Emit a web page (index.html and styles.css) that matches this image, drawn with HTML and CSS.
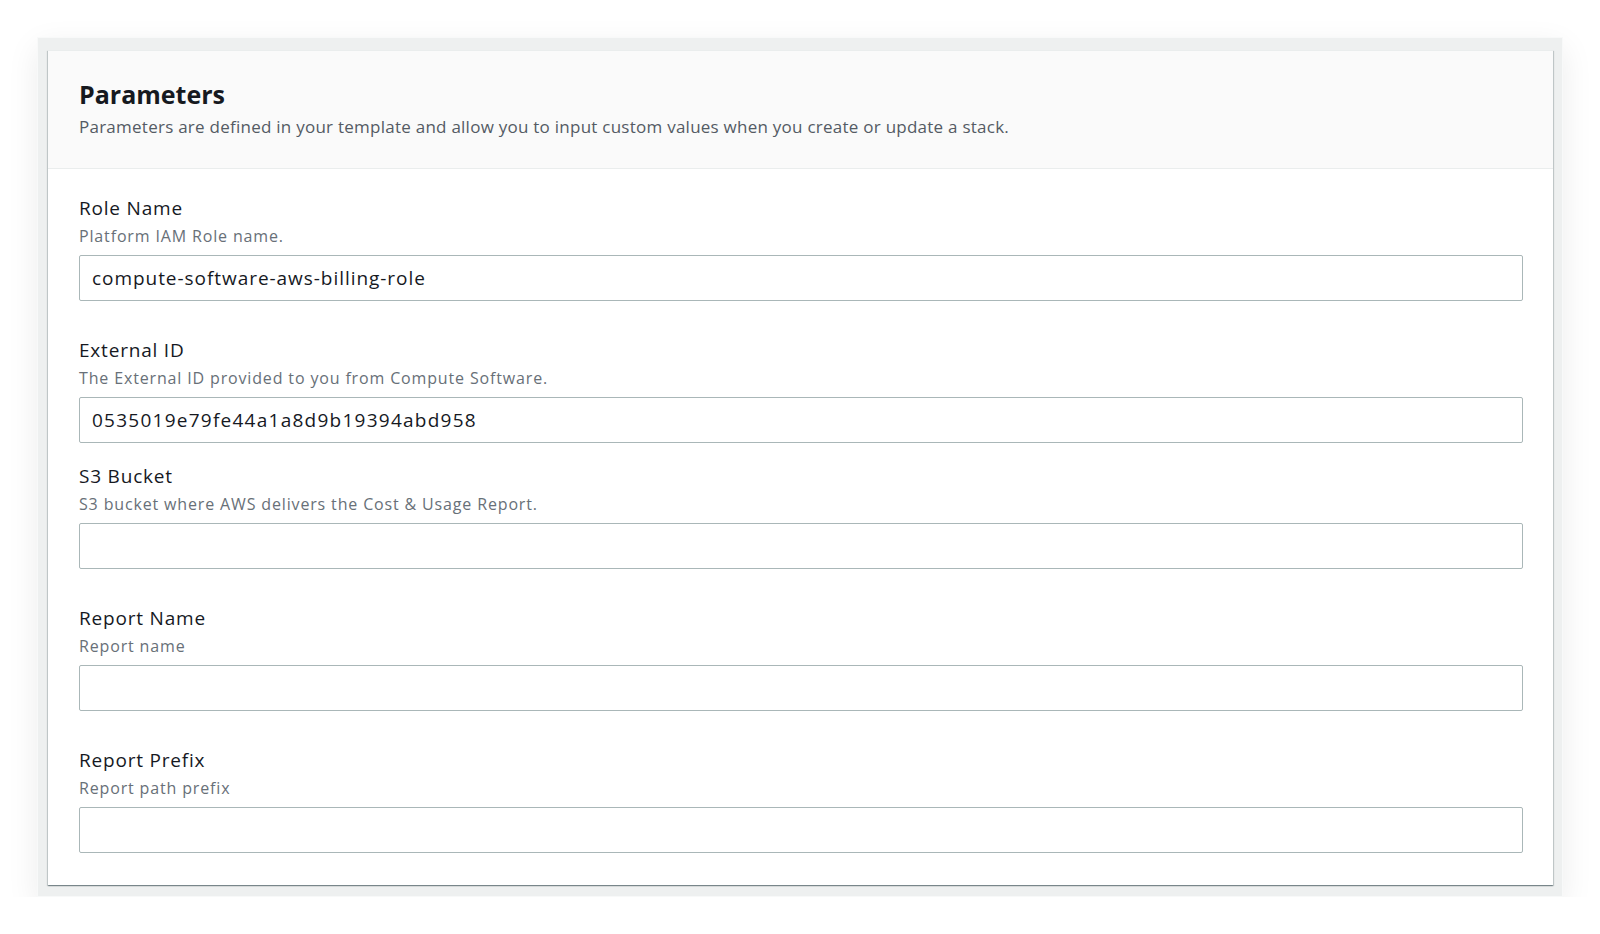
FILE: index.html
```html
<!DOCTYPE html>
<html>
<head>
  <meta charset="utf-8">
  <title>Parameters</title>
  <link rel="stylesheet" href="styles.css">
</head>
<body>
<div class="frame">
  <div class="card">
    <!-- header -->
    <div class="card-header">
      <h2>Parameters</h2>
      <p>Parameters are defined in your template and allow you to input custom values when you create or update a stack.</p>
    </div>

    <!-- fields -->
    <div class="card-body">
      <div class="field">
        <label for="roleName">Role Name</label>
        <div class="hint">Platform IAM Role name.</div>
        <input type="text" id="roleName" value="compute-software-aws-billing-role">
      </div>
      <div class="field tight">
        <label for="externalId">External ID</label>
        <div class="hint">The External ID provided to you from Compute Software.</div>
        <input type="text" id="externalId" class="hex" value="0535019e79fe44a1a8d9b19394abd958">
      </div>
      <div class="field">
        <label for="bucket">S3 Bucket</label>
        <div class="hint">S3 bucket where AWS delivers the Cost &amp; Usage Report.</div>
        <input type="text" id="bucket">
      </div>
      <div class="field">
        <label for="reportName">Report Name</label>
        <div class="hint">Report name</div>
        <input type="text" id="reportName">
      </div>
      <div class="field">
        <label for="reportPrefix">Report Prefix</label>
        <div class="hint">Report path prefix</div>
        <input type="text" id="reportPrefix">
      </div>
    </div>
  </div>
</div>
</body>
</html>
```

FILE: styles.css
```css
/* page */
body { margin: 0; padding: 0; background: #fff; font-family: "Open Sans", Arial, sans-serif; color: #16191f; }
.frame { width: 1505px; margin: 37px 0 0 37px; padding: 12px 9px 11px 10px; background: #eef0f0; border: 1px solid #f8f9f9; box-shadow: 0 10px 30px rgba(0, 0, 0, 0.08); }

/* card */
.card { background: #fff; border-top: 1px solid #eaeded; box-shadow: 0 1px 1px 0 rgba(0, 28, 36, 0.3), 1px 1px 1px 0 rgba(0, 28, 36, 0.15), -1px 1px 1px 0 rgba(0, 28, 36, 0.15); }
.card-header { background: #fafafa; border-bottom: 1px solid #eaeded; padding: 27px 30px 30px 31px; }
.card-header h2 { margin: 0; font-size: 25px; line-height: 32px; font-weight: 700; color: #16191f; }
.card-header p { margin: 6px 0 0; font-size: 17px; line-height: 22px; letter-spacing: 0.25px; color: #545b64; }

.card-body { padding: 26px 30px 32px 31px; }

/* fields */
.field { margin-bottom: 36px; }
.field:last-child { margin-bottom: 0; }
.field.tight { margin-bottom: 20px; }
.field label { display: block; font-size: 19px; line-height: 26px; letter-spacing: 0.8px; color: #16191f; }
.field .hint { margin-top: 4px; font-size: 16px; line-height: 22px; letter-spacing: 0.85px; color: #687078; }
.field input { display: block; box-sizing: border-box; width: 100%; height: 46px; margin-top: 8px; padding: 0 12px; border: 1px solid #aab7b8; border-radius: 2px; font-family: "Open Sans", Arial, sans-serif; font-size: 19px; letter-spacing: 0.95px; color: #16191f; background: #fff; outline: none; }
.field input.hex { letter-spacing: 1.25px; }
```
